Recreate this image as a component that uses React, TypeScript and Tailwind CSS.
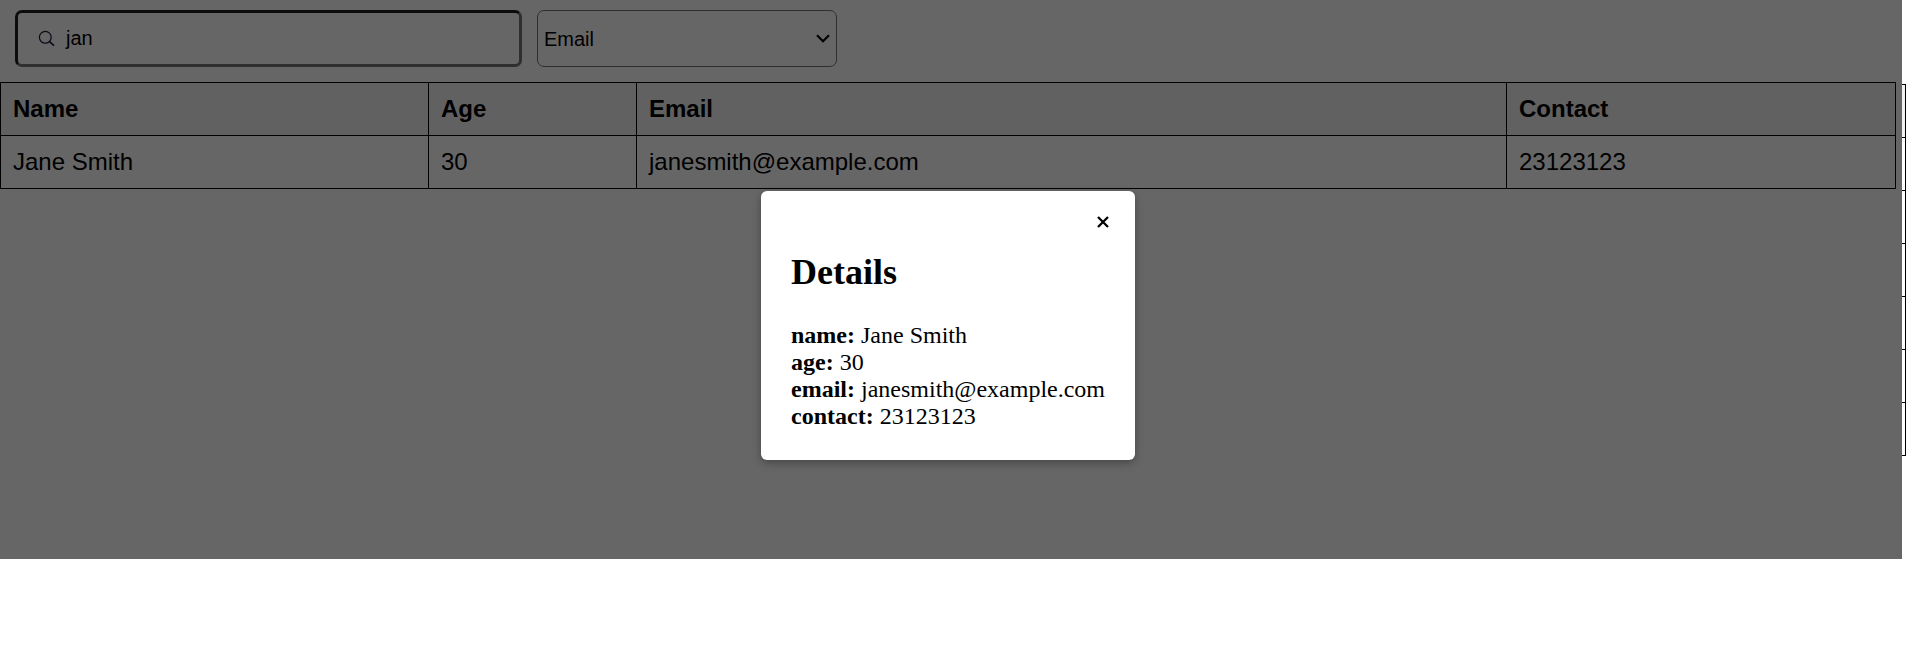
type Person = { name: string; age: string; email: string; contact: string };

const jane: Person = {
  name: "Jane Smith",
  age: "30",
  email: "janesmith@example.com",
  contact: "23123123",
};

const details: (keyof Person)[] = ["name", "age", "email", "contact"];
const pageRows = [0, 1, 2, 3, 4, 5];

function SearchBar() {
  return (
    <div className="flex gap-[15px] px-[15px] pt-[10px]">
      <div className="flex h-[57px] w-[507px] items-center rounded-[7px] border-[3px] border-t-[#1e1e1e] border-r-[#767676] border-b-[#767676] border-l-[#1e1e1e] pl-5">
        <svg className="mt-px size-[18px]" viewBox="0 0 18 18" fill="none" stroke="#1c1c3a" strokeWidth="1.2">
          <circle cx="7.3" cy="7.3" r="5.9" />
          <path d="M11.6 11.6 16 15.7" strokeWidth="1.6" />
        </svg>
        <span className="mb-[2px] ml-[10px] text-[20px] leading-6">jan</span>
      </div>
      <div className="flex h-[57px] w-[300px] items-center justify-between rounded-[7px] border border-[#767676] pr-[6px] pl-[6px]">
        <span className="text-[20px] leading-6">Email</span>
        <svg className="h-[9px] w-[14px]" viewBox="0 0 14 9" fill="none" stroke="#000" strokeWidth="2.2">
          <path d="M1 1.2 7 7.2l6-6" />
        </svg>
      </div>
    </div>
  );
}

function ResultsTable() {
  return (
    <table className="mt-[15px] w-[1896px] table-fixed border-separate border-spacing-0 border-t border-l border-black text-left text-[24px] leading-[27px]">
      <colgroup>
        <col className="w-[428px]" />
        <col className="w-[208px]" />
        <col className="w-[870px]" />
        <col />
      </colgroup>
      <thead>
        <tr className="h-[53px] bg-[#f2f2f2]">
          {["Name", "Age", "Email", "Contact"].map((h) => (
            <th key={h} className="border-r border-b border-black px-3 pt-0 pb-[2px] font-bold">
              {h}
            </th>
          ))}
        </tr>
      </thead>
      <tbody>
        <tr className="h-[53px]">
          {details.map((k) => (
            <td key={k} className="border-r border-b border-black px-3 pt-0 pb-[2px]">
              {jane[k]}
            </td>
          ))}
        </tr>
      </tbody>
    </table>
  );
}

function DetailsDialog() {
  return (
    <div className="absolute top-[191px] left-[761px] h-[269px] w-[374px] rounded-md bg-white px-[30px] font-['Liberation_Serif',serif] text-[24px] leading-[27px] whitespace-nowrap shadow-[0_3px_9px_rgba(0,0,0,0.3)]">
      <div className="-mr-[4px] flex h-[57px] items-center justify-end pt-[5px]">
        <button aria-label="Close">
          <svg className="size-[12px]" viewBox="0 0 12 12" fill="none" stroke="#000" strokeWidth="2.3">
            <path d="M1 1l10 10M11 1 1 11" />
          </svg>
        </button>
      </div>
      <h2 className="mt-[3px] text-[36px] leading-[42px] font-bold">Details</h2>
      <div className="mt-[29px]">
        {details.map((k) => (
          <div key={k}>
            <strong>{k}:</strong> {jane[k]}
          </div>
        ))}
      </div>
    </div>
  );
}

export default function App() {
  return (
    <main className="relative h-[648px] w-[1914px] overflow-hidden bg-white pt-[84px] text-black">
      <div className="w-[1906px] border-t border-r border-black">
        <div className="h-[53px] border-b border-black bg-[#f2f2f2]" />
        {pageRows.map((r) => (
          <div key={r} className="h-[53px] border-b border-black" />
        ))}
      </div>
      <div className="absolute top-0 left-0 h-[559px] w-[1902px] bg-white font-['Liberation_Sans',Arial,sans-serif]">
        <SearchBar />
        <ResultsTable />
        <div className="absolute inset-0 bg-black/60" />
        <DetailsDialog />
      </div>
    </main>
  );
}
